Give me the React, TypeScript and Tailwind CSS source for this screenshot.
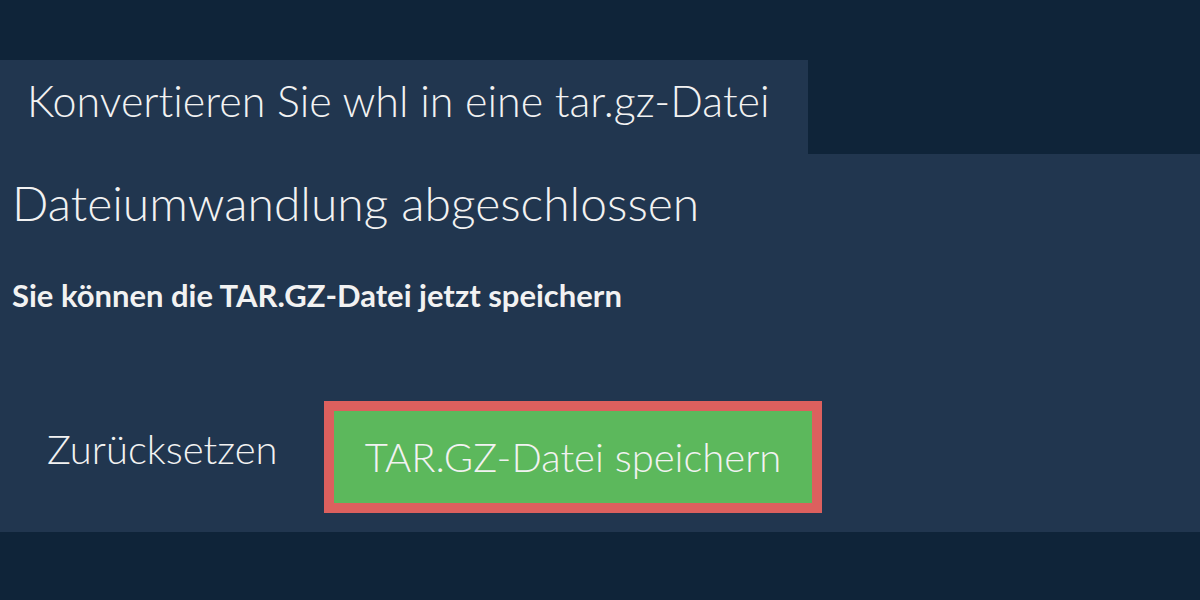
export default function App() {
  return (
    <div
      className="min-h-[600px] w-[1200px] bg-[#0f2439] pt-[60px] text-[#f2f2f2] [font-variant-ligatures:none]"
      style={{ fontFamily: "Lato, 'Open Sans', sans-serif" }}
    >
      <div className="h-[94px] w-[808px] bg-[#21364f] pl-[27px] pt-[19px]">
        <h1 className="text-[43px] font-light leading-none">
          Konvertieren Sie whl in eine tar.gz-Datei
        </h1>
      </div>

      <section className="h-[378px] bg-[#21364f] px-[12px] pt-[25px]">
        <h2 className="text-[48px] font-light leading-none">
          Dateiumwandlung abgeschlossen
        </h2>
        <p className="mt-[53px] text-[31px] font-bold leading-none">
          Sie können die TAR.GZ-Datei jetzt speichern
        </p>

        <div className="mt-[90px] flex items-start">
          <button className="mt-[28px] w-[312px] pl-[35px] text-left text-[40px] font-light leading-none">
            Zurücksetzen
          </button>
          <button className="h-[112px] w-[498px] border-[10px] border-[#dc605e] bg-[#5cb85c] text-[40px] font-light leading-none">
            TAR.GZ-Datei speichern
          </button>
        </div>
      </section>
    </div>
  );
}
